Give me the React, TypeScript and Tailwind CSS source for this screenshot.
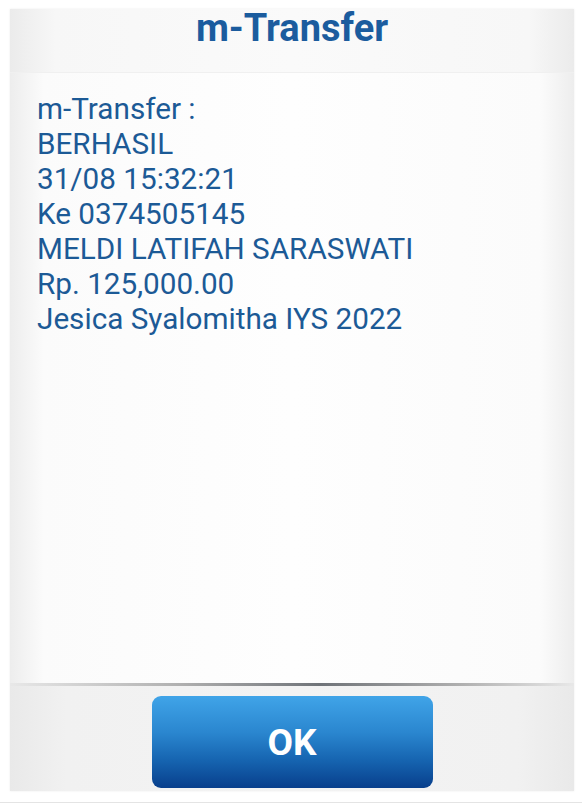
import React from "react";

export default function App() {
  const lines = [
    "m-Transfer :",
    "BERHASIL",
    "31/08 15:32:21",
    "Ke 0374505145",
    "MELDI LATIFAH SARASWATI",
    "Rp. 125,000.00",
    "Jesica Syalomitha IYS 2022",
  ];
  return (
    <div
      className="w-[582px] h-[807px] bg-white flex flex-col overflow-hidden"
      style={{ fontFamily: "Roboto, 'Liberation Sans', sans-serif" }}
    >
      <div className="ml-[10px] mt-[9px] w-[564px] h-[782px] flex flex-col bg-[linear-gradient(90deg,#ebebeb_0%,#f7f7f7_8%,#fafafa_50%,#f7f7f7_92%,#ebebeb_100%)] shadow-[0_0_2px_rgba(0,0,0,0.08)]">
        <div className="h-[64px] flex items-start justify-center border-b border-[#f0f0f0]">
          <span className="text-[38px] font-bold text-[#1b5c9e] leading-[38px]">m-Transfer</span>
        </div>
        <div className="flex-1 pl-[27px] pt-[18px] bg-[linear-gradient(90deg,#ededed_0%,#fbfbfb_6%,#fefefe_50%,#fbfbfb_94%,#ededed_100%)]">
          {lines.map((l) => (
            <div key={l} className="text-[29.7px] leading-[35px] text-[#1c5a96]">
              {l}
            </div>
          ))}
        </div>
        <div className="h-[3px] bg-[linear-gradient(90deg,#e8e8e8_0%,#b0b0b0_30%,#6f7378_55%,#b0b0b0_80%,#e8e8e8_100%)]" />
        <div className="flex-1 max-h-[105px] flex justify-center pt-[10px] bg-[linear-gradient(90deg,#e9e9e9_0%,#f1f1f1_10%,#f3f3f3_50%,#f1f1f1_90%,#e9e9e9_100%)]">
          <div className="w-[281px] h-[92px] rounded-[9px] bg-[linear-gradient(180deg,#40a4e8_0%,#2a86cf_40%,#1664b0_70%,#083f8c_100%)] flex items-center justify-center">
            <span className="text-white text-[37px] font-bold leading-none">OK</span>
          </div>
        </div>
      </div>
      <div className="mt-[11px] h-[1px] bg-[#e4e4e4]" />
    </div>
  );
}
